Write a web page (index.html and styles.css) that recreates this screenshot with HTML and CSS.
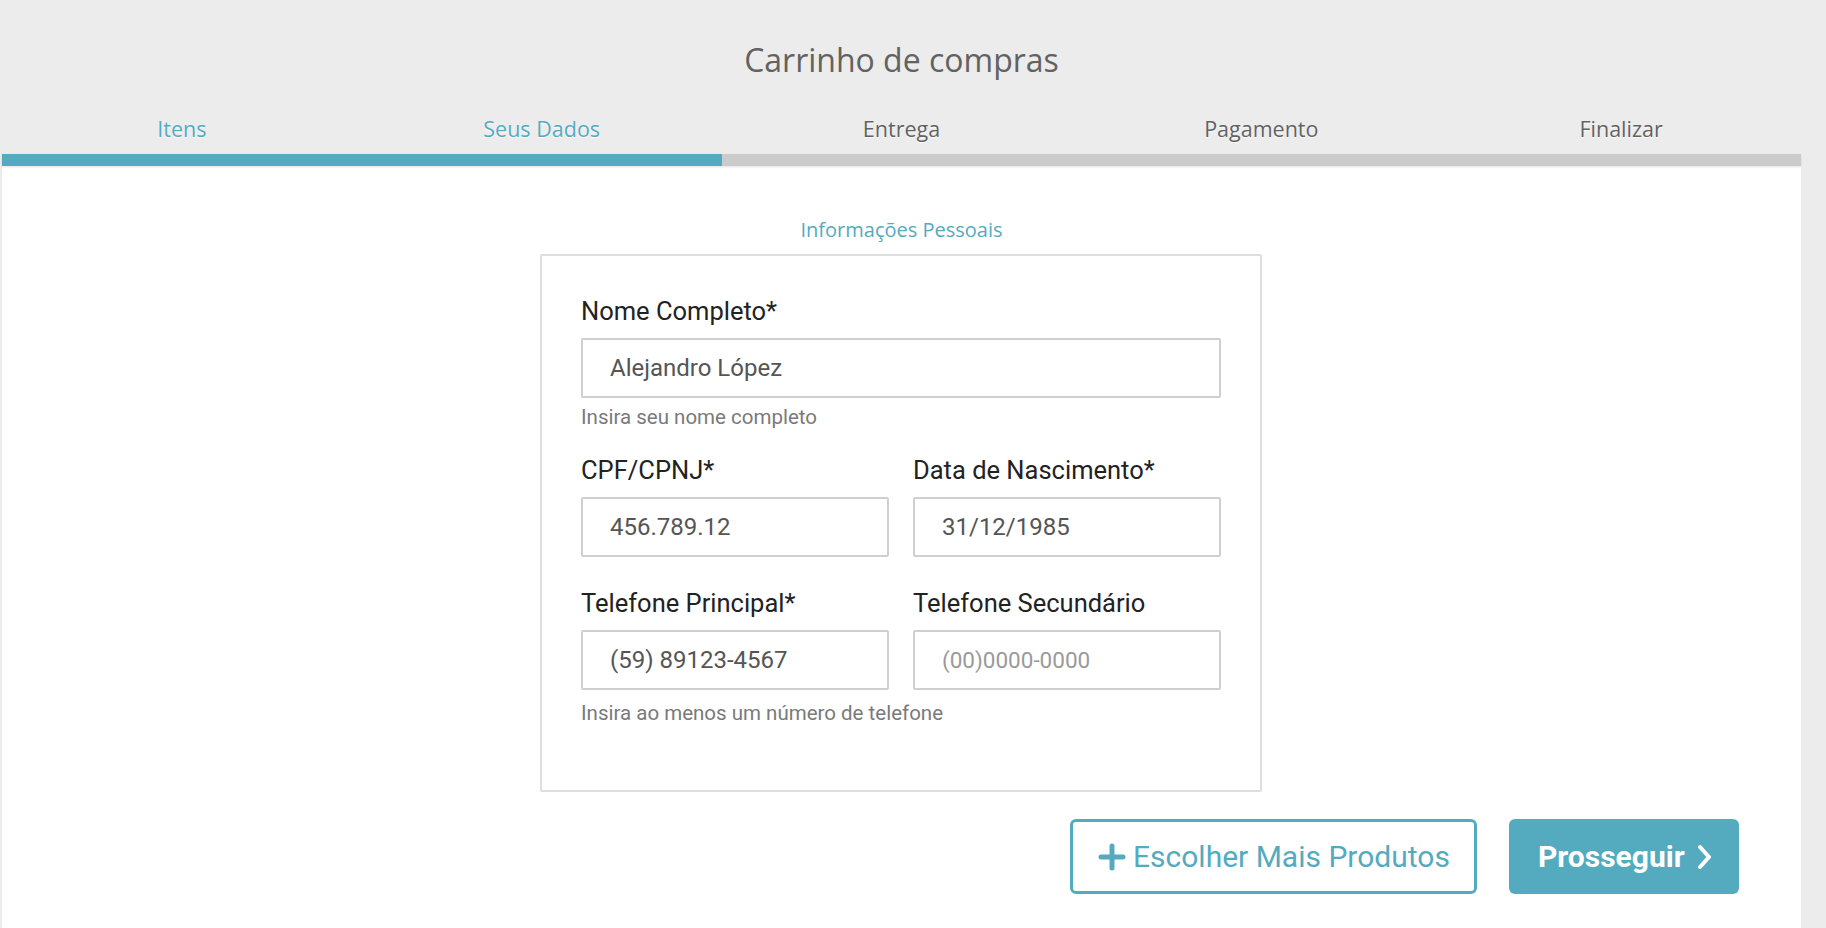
FILE: index.html
```html
<!DOCTYPE html>
<html lang="pt">
<head>
<meta charset="utf-8">
<title>Carrinho de compras</title>
<link rel="stylesheet" href="styles.css">
</head>
<body>
<div class="page">
  <header class="header">
    <h1 class="title">Carrinho de compras</h1>
    <nav class="steps">
      <div class="step active">Itens</div>
      <div class="step active">Seus Dados</div>
      <div class="step">Entrega</div>
      <div class="step">Pagamento</div>
      <div class="step">Finalizar</div>
    </nav>
    <div class="progress"><div class="progress-fill" style="width:40%"></div></div>
  </header>
  <main class="panel">
    <h2 class="section-title">Informações Pessoais</h2>
    <form class="form-box">
      <div class="field">
        <label class="label">Nome Completo*</label>
        <div class="input">Alejandro López</div>
        <div class="help">Insira seu nome completo</div>
      </div>
      <div class="row row-2">
        <div class="field">
          <label class="label">CPF/CPNJ*</label>
          <div class="input">456.789.12</div>
        </div>
        <div class="field">
          <label class="label">Data de Nascimento*</label>
          <div class="input">31/12/1985</div>
        </div>
      </div>
      <div class="row row-3">
        <div class="field">
          <label class="label">Telefone Principal*</label>
          <div class="input">(59) 89123-4567</div>
        </div>
        <div class="field">
          <label class="label">Telefone Secundário</label>
          <div class="input placeholder">(00)0000-0000</div>
        </div>
      </div>
      <div class="help help-last">Insira ao menos um número de telefone</div>
    </form>
    <div class="actions">
      <button class="btn btn-outline" type="button">
        <svg class="plus" width="28" height="28" viewBox="0 0 28 28"><path d="M14 3v22M3 14h22" stroke="currentColor" stroke-width="5" stroke-linecap="round" fill="none"/></svg>
        <span>Escolher Mais Produtos</span>
      </button>
      <button class="btn btn-primary" type="button">
        <span>Prosseguir</span>
        <svg class="chev" width="14" height="28" viewBox="0 0 14 28"><path d="M3 4l9 10-9 10" stroke="currentColor" stroke-width="4" stroke-linecap="round" stroke-linejoin="round" fill="none"/></svg>
      </button>
    </div>
  </main>
</div>
</body>
</html>
```

FILE: styles.css
```css
html, body {
  margin: 0;
  padding: 0;
}
body {
  background: #ececec;
  font-family: Roboto, "Liberation Sans", sans-serif;
}
.page {
  width: 1799px;
  margin-left: 2px;
  min-height: 928px;
  display: flex;
  flex-direction: column;
}
.header {
  display: flex;
  flex-direction: column;
}
.title {
  margin: 0;
  padding-top: 38px;
  font-family: "Open Sans", sans-serif;
  font-weight: 400;
  font-size: 32px;
  line-height: 44px;
  color: #626262;
  text-align: center;
}
.steps {
  margin-top: 32px;
  display: grid;
  grid-template-columns: repeat(5, 1fr);
}
.step {
  font-family: "Open Sans", sans-serif;
  font-size: 21.5px;
  line-height: 30px;
  color: #626262;
  text-align: center;
  text-shadow: 0 1px 1px #fff;
}
.step.active {
  color: #54abc0;
}
.progress {
  margin-top: 10px;
  height: 12px;
  background: #cbcbcb;
  box-shadow: 0 1px 2px rgba(0,0,0,0.12);
  position: relative;
  z-index: 1;
}
.progress-fill {
  height: 100%;
  background: #54abc0;
}
.panel {
  flex: 1;
  background: #fff;
  padding-top: 50px;
  display: flex;
  flex-direction: column;
  align-items: center;
}
.section-title {
  margin: 0;
  font-family: "Open Sans", sans-serif;
  font-weight: 400;
  font-size: 20px;
  line-height: 28px;
  color: #54abc0;
}
.form-box {
  margin-top: 10px;
  margin-right: 1px;
  width: 722px;
  box-sizing: border-box;
  border: 2px solid #dedede;
  border-radius: 2px;
  padding: 40px 39px 66px;
}
.field {
  display: flex;
  flex-direction: column;
}
.label {
  font-size: 25.5px;
  line-height: 30px;
  color: #222;
}
.input {
  margin-top: 12px;
  height: 60px;
  box-sizing: border-box;
  border: 2px solid #cfcfcf;
  border-radius: 2px;
  padding-left: 27px;
  display: flex;
  align-items: center;
  font-size: 24px;
  color: #555;
}
.input.placeholder {
  font-size: 22.5px;
  color: #9a9a9a;
}
.help {
  margin-top: 8px;
  font-size: 20.5px;
  line-height: 22px;
  color: #7a7a7a;
}
.help-last {
  margin-top: 12px;
}
.row {
  display: grid;
  grid-template-columns: 1fr 1fr;
  column-gap: 24px;
}
.row-2 {
  margin-top: 27px;
}
.row-3 {
  margin-top: 31px;
}
.actions {
  align-self: stretch;
  margin-top: 27px;
  padding-right: 62px;
  display: flex;
  justify-content: flex-end;
  gap: 32px;
}
.btn {
  height: 75px;
  box-sizing: border-box;
  border-radius: 6px;
  display: flex;
  align-items: center;
  font-family: Roboto, sans-serif;
  font-size: 30px;
  cursor: pointer;
}
.btn-outline {
  width: 407px;
  background: #fff;
  border: 3px solid #54abc0;
  color: #54abc0;
  padding: 0 0 0 25px;
  gap: 7px;
}
.btn-primary {
  width: 230px;
  background: #54abc0;
  border: none;
  color: #fff;
  font-weight: 700;
  padding: 0 0 0 29px;
  gap: 12px;
}
.plus, .chev {
  flex: none;
}
```
